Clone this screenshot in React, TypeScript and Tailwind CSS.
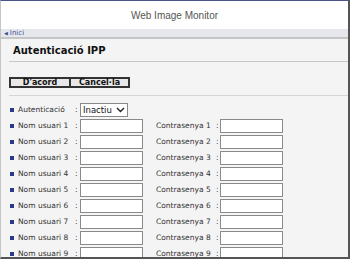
import React from 'react';

const rows = [1, 2, 3, 4, 5, 6, 7, 8, 9];

const Bullet = () => <span className="inline-block w-[4px] h-[4px] bg-[#2b3a85] mr-[4px] shrink-0" />;

const Field = () => (
  <input type="text" className="w-[63px] h-[14px] shrink-0 bg-white border border-[#8a8a8a] outline-none" />
);

export default function App() {
  return (
    <div
      className="w-[350px] h-[259px] overflow-hidden flex flex-col border-t border-t-[#4b5488] border-l border-l-[#c4c4c4] border-r-2 border-r-[#555] border-b-2 border-b-[#555] bg-[#f4f4f4]"
      style={{ fontFamily: '"DejaVu Sans", Verdana, sans-serif' }}
    >
      {/* Header */}
      <div
        className="h-[28px] shrink-0 bg-white flex items-center justify-center text-[10px] text-[#555]"
        style={{ fontFamily: '"Liberation Sans", Arial, sans-serif' }}
      >
        Web Image Monitor
      </div>
      <div className="h-[8px] shrink-0 bg-[#e6e7ec] flex items-center pl-[3px] text-[7px] leading-none text-[#3b4f94]">
        <span className="text-[5px] mr-[2px]">◀</span>Inici
      </div>
      <div className="h-[2px] shrink-0 bg-[#c6c6c6]" />

      {/* Content */}
      <div className="flex-1 min-h-0 pl-[8px]">
        <div className="h-[22px] flex items-center pl-[4px] text-[10px] font-bold text-[#111]">Autenticació IPP</div>
        <div className="border-t border-[#c8c8c8]" />

        <div className="mt-[15px] flex">
          <button className="w-[60px] h-[11px] bg-[#e8e8e8] border-y-2 border-l-2 border-[#333] text-[8px] leading-none font-bold text-[#111]">
            D'acord
          </button>
          <button className="w-[61px] h-[11px] bg-[#e8e8e8] border-y-2 border-x-2 border-[#333] text-[8px] leading-none font-bold text-[#111]">
            Cancel·la
          </button>
        </div>
        <div className="mt-[7px] border-t border-[#d4d4d4]" />

        <div className="mt-[6px] flex flex-col text-[7.5px] text-[#333] whitespace-nowrap">
          <div className="h-[16px] flex items-center pl-[1px]">
            <Bullet />
            <span className="w-[57px]">Autenticació</span>
            <span className="w-[5px]">:</span>
            <div className="w-[48px] h-[14px] bg-white border border-[#8a8a8a] flex items-center justify-between px-[2px] text-[8.5px] text-[#111]">
              <span>Inactiu</span>
              <svg width="9" height="6" viewBox="0 0 9 6">
                <path d="M1 1 L4.5 4.5 L8 1" fill="none" stroke="#222" strokeWidth="1.4" />
              </svg>
            </div>
          </div>
          {rows.map((n) => (
            <div key={n} className="h-[16px] flex items-center pl-[1px]">
              <Bullet />
              <span className="w-[57px]">Nom usuari {n}</span>
              <span className="w-[5px]">:</span>
              <Field />
              <span className="ml-[13px] w-[60px]">Contrasenya {n}</span>
              <span className="w-[4px]">:</span>
              <Field />
            </div>
          ))}
        </div>
      </div>
    </div>
  );
}
